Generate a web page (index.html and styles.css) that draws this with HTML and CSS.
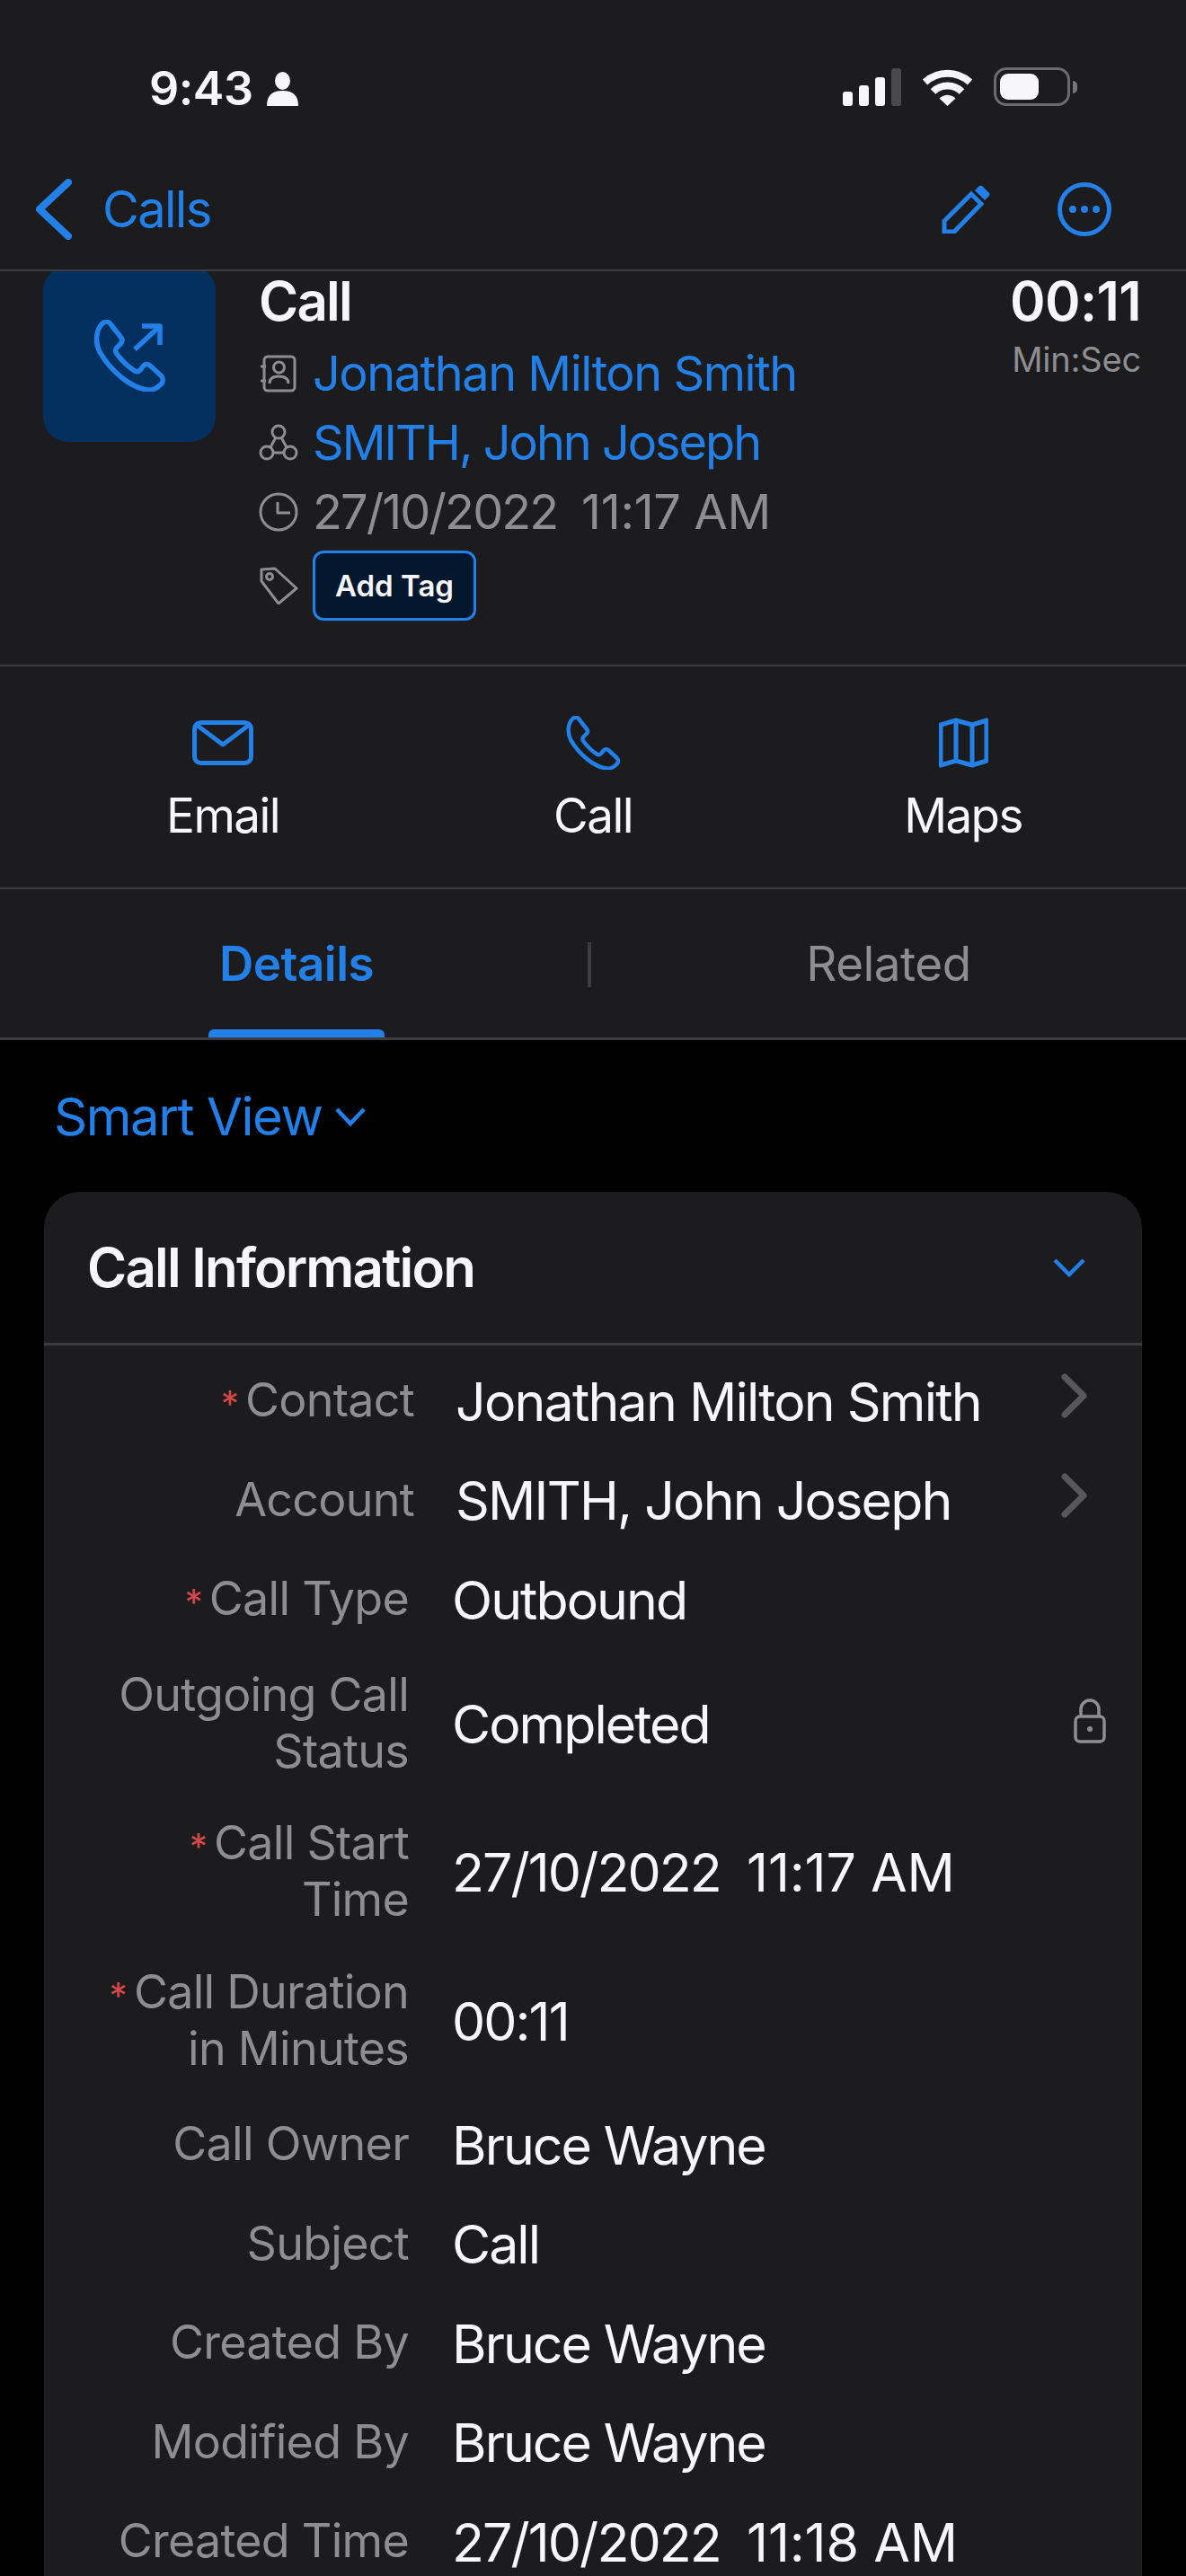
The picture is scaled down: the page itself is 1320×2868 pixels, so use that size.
FILE: index.html
```html
<!DOCTYPE html>
<html lang="en">
  <head>
    <meta charset="UTF-8" />
    <meta name="viewport" content="width=device-width, initial-scale=1.0" />
    <title>Call</title>
    <link rel="stylesheet" href="styles.css">
  </head>
  <body>
    <div class="screen">
      <div class="top-bar">
        <div class="status-bar">
          <span class="clock">9:43</span>
          <svg class="icon-person" width="35" height="38" viewBox="0 0 35 38"><ellipse cx="17.5" cy="10" rx="8.5" ry="10"/><path d="M0 38c0-13 7-17 17.5-17S35 25 35 38z"/></svg>
          <svg class="icon-signal" width="65" height="42" viewBox="0 0 65 42">
            <rect x="0" y="26" width="11" height="16" rx="3"/>
            <rect x="18" y="19" width="11" height="23" rx="3"/>
            <rect x="36" y="10" width="11" height="32" rx="3"/>
            <rect class="off" x="54" y="0" width="11" height="42" rx="3"/>
          </svg>
          <svg class="icon-wifi" width="57" height="42" viewBox="0 0 57 42">
            <path class="arc" d="M3.5 15.5A37 37 0 0 1 53.5 15.5"/>
            <path class="arc" d="M12.5 26A23 23 0 0 1 44.5 26"/>
            <path d="M19.5 33.5Q28.5 26 37.5 33.5L28.5 42z"/>
          </svg>
          <div class="battery"><div class="battery-fill"></div></div>
          <div class="battery-nub"></div>
        </div>
        <nav class="nav-bar">
          <svg class="nav-back" width="40" height="68" viewBox="0 0 40 68"><path d="M36 4L4 34l32 30"/></svg>
          <span class="nav-title">Calls</span>
          <svg class="nav-edit" width="54" height="54" viewBox="0 0 54 54">
            <path class="line" d="M3 40L33 10l11 11-30 31H3z"/>
            <path class="solid" d="M37 6l5-5q2-1 3 0l8 8q1 2 0 3l-5 5z"/>
          </svg>
          <svg class="nav-more" width="60" height="60" viewBox="0 0 60 60">
            <circle class="line" cx="30" cy="30" r="27.5"/>
            <circle class="solid" cx="17" cy="30" r="4"/>
            <circle class="solid" cx="30" cy="30" r="4"/>
            <circle class="solid" cx="43" cy="30" r="4"/>
          </svg>
        </nav>
      </div>

      <header class="call-head">
        <div class="avatar-clip">
          <div class="call-avatar">
            <svg width="80" height="80" viewBox="0 0 80 80">
              <path d="M10 4C14 1 18 2 20 6L31 20C33 23 32 25 30 27L26 31C24 33 24 35 26 38C32 46 38 52 46 57C48 58 50 58 52 56L56 51C58 49 61 49 63 51L75 62C78 65 78 69 75 72C71 76 66 79 60 78C42 76 20 58 7 36C2 26 2 12 10 4Z"/>
              <path d="M46 33L73 8M54 7H74V28"/>
            </svg>
          </div>
        </div>
        <div class="call-info">
          <div class="call-title">Call</div>
          <div class="call-line link">
            <svg width="44" height="42" viewBox="0 0 44 42">
              <rect x="6" y="2" width="34" height="38" rx="4"/>
              <path d="M2 13h6M2 29h6M12 32c0-6 4-8 10-8s11 2 11 8"/>
              <circle cx="22.500" cy="14" r="6"/>
            </svg>
            <span>Jonathan Milton Smith</span>
          </div>
          <div class="call-line link">
            <svg width="44" height="42" viewBox="0 0 44 42">
              <circle cx="22" cy="9" r="7"/>
              <circle cx="9" cy="32" r="7"/>
              <circle cx="35" cy="32" r="7"/>
              <path d="M19 15l-6 11M25 15l6 11M16 32h12"/>
            </svg>
            <span class="tight">SMITH, John Joseph</span>
          </div>
          <div class="call-line muted">
            <svg width="44" height="44" viewBox="0 0 44 44">
              <circle cx="22" cy="22" r="20"/>
              <path d="M21 11v12h14"/>
            </svg>
            <span class="keep tight-date">27/10/2022  <span class="time">11:17 AM</span></span>
          </div>
          <div class="call-tags">
            <svg width="44" height="42" viewBox="0 0 44 42">
              <path d="M3 3l15-1 24 22-20 17L3 16z"/>
              <circle cx="12" cy="11" r="3.500"/>
            </svg>
            <button class="tag-btn">Add Tag</button>
          </div>
        </div>
        <div class="call-time">
          <div class="call-time-val">00:11</div>
          <div class="call-time-unit">Min:Sec</div>
        </div>
      </header>

      <section class="actions">
        <div class="action">
          <svg width="68" height="50" viewBox="0 0 68 50">
            <rect x="2.500" y="2.500" width="63" height="45" rx="7"/>
            <path d="M6 6l28 21L62 6"/>
          </svg>
          <span>Email</span>
        </div>
        <div class="action">
          <svg width="60" height="60" viewBox="0 0 80 80">
            <path d="M10 4C14 1 18 2 20 6L31 20C33 23 32 25 30 27L26 31C24 33 24 35 26 38C32 46 38 52 46 57C48 58 50 58 52 56L56 51C58 49 61 49 63 51L75 62C78 65 78 69 75 72C71 76 66 79 60 78C42 76 20 58 7 36C2 26 2 12 10 4Z"/>
          </svg>
          <span>Call</span>
        </div>
        <div class="action">
          <svg width="55" height="54" viewBox="0 0 55 54">
            <path d="M2 7L19 2 37 7 53 2V47L37 52 19 47 2 52ZM19 2V47M37 7V52"/>
          </svg>
          <span>Maps</span>
        </div>
      </section>

      <div class="tabs">
        <div class="tab active">Details</div>
        <div class="tab-sep"></div>
        <div class="tab">Related</div>
      </div>

      <main class="content">
        <div class="smart-view">
          <span>Smart View</span>
          <svg width="34" height="22" viewBox="0 0 34 22"><path d="M2 3l15 16L32 3"/></svg>
        </div>

        <section class="card">
          <div class="card-head">
            <h2>Call Information</h2>
            <svg width="36" height="22" viewBox="0 0 36 22"><path d="M2 3l16 16L34 3"/></svg>
          </div>

          <div class="field shift">
            <div class="field-label"><span class="req">*</span>Contact</div>
            <div class="field-value">Jonathan Milton Smith</div>
            <svg class="field-go" width="30" height="50" viewBox="0 0 30 50"><path d="M4 4l21 21L4 46"/></svg>
          </div>
          <div class="field shift">
            <div class="field-label">Account</div>
            <div class="field-value">SMITH, John Joseph</div>
            <svg class="field-go" width="30" height="50" viewBox="0 0 30 50"><path d="M4 4l21 21L4 46"/></svg>
          </div>
          <div class="field">
            <div class="field-label"><span class="req">*</span>Call Type</div>
            <div class="field-value">Outbound</div>
          </div>
          <div class="field tall">
            <div class="field-label">Outgoing Call<br>Status</div>
            <div class="field-value">Completed</div>
            <svg class="field-lock" width="36" height="50" viewBox="0 0 36 50">
              <rect x="2" y="20" width="32" height="28" rx="5"/>
              <path d="M8 20v-8a10 10 0 0 1 20 0v8"/>
              <circle class="dot" cx="18" cy="34" r="3"/>
            </svg>
          </div>
          <div class="field tall">
            <div class="field-label"><span class="req">*</span>Call Start<br>Time</div>
            <div class="field-value">27/10/2022  <span class="time">11:17 AM</span></div>
          </div>
          <div class="field tall">
            <div class="field-label"><span class="req">*</span>Call Duration<br>in Minutes</div>
            <div class="field-value">00:11</div>
          </div>
          <div class="field">
            <div class="field-label">Call Owner</div>
            <div class="field-value">Bruce Wayne</div>
          </div>
          <div class="field">
            <div class="field-label">Subject</div>
            <div class="field-value">Call</div>
          </div>
          <div class="field">
            <div class="field-label">Created By</div>
            <div class="field-value">Bruce Wayne</div>
          </div>
          <div class="field">
            <div class="field-label">Modified By</div>
            <div class="field-value">Bruce Wayne</div>
          </div>
          <div class="field">
            <div class="field-label">Created Time</div>
            <div class="field-value">27/10/2022  <span class="time">11:18 AM</span></div>
          </div>
        </section>
      </main>
    </div>
  </body>
</html>
```

FILE: styles.css
```css
:root {
  --panel: #1c1c1e;
  --blue: #2280e8;
  --text: #f7f7f9;
  --muted: #8e8e92;
  --line: #3d3d40;
}

* {
  padding: 0;
  margin: 0;
  box-sizing: border-box;
}

body {
  background: #000;
  color: var(--text);
  font-family: Inter, "Noto Sans", sans-serif;
  overflow: hidden;
}

.screen {
  height: 2868px;
  overflow: hidden;
}

svg {
  flex: none;
  display: block;
  fill: none;
}

/* status + nav */
.top-bar {
  height: 302px;
  background: var(--panel);
  border-bottom: 2px solid var(--line);
}

.status-bar {
  height: 118px;
  padding: 75px 0 0 166px;
  display: flex;
  align-items: flex-end;
}

.clock {
  width: 131px;
  font-size: 52px;
  font-weight: 600;
  line-height: 38px;
  letter-spacing: -0.01em;
}

.icon-person {
  fill: var(--text);
}

.icon-signal {
  margin-left: 606px;
  fill: var(--text);
}

.icon-signal .off {
  fill: #4a4a4c;
}

.icon-wifi {
  margin-left: 23px;
  fill: var(--text);
}

.icon-wifi .arc {
  fill: none;
  stroke: var(--text);
  stroke-width: 8;
}

.battery {
  width: 85px;
  height: 43px;
  margin-left: 23px;
  padding: 4px;
  border: 3.5px solid #6c6c6e;
  border-radius: 14px;
}

.battery-fill {
  width: 43px;
  height: 100%;
  background: var(--text);
  border-radius: 9px;
}

.battery-nub {
  width: 5px;
  height: 14px;
  margin: 0 0 14px 3px;
  background: #77777a;
  border-radius: 0 5px 5px 0;
}

.nav-bar {
  display: flex;
  align-items: center;
  height: 182px;
  padding-top: 48px;
  padding-left: 40px;
}

.nav-back path {
  stroke: var(--blue);
  stroke-width: 8;
  stroke-linecap: round;
  stroke-linejoin: round;
}

.nav-title {
  margin-left: 34px;
  font-size: 56px;
  letter-spacing: -0.03em;
  color: var(--blue);
}

.nav-edit {
  margin-left: 813px;
}

.nav-more {
  margin-left: 75px;
}

.line {
  stroke: var(--blue);
  stroke-width: 5;
}

.solid {
  fill: var(--blue);
}

/* call header */
.call-head {
  position: relative;
  display: flex;
  height: 440px;
  background: var(--panel);
  border-bottom: 2px solid var(--line);
}

.avatar-clip {
  width: 192px;
  height: 191px;
  margin-left: 48px;
  overflow: hidden;
}

.call-avatar {
  height: 196px;
  margin-top: -6px;
  padding: 60px 0 0 56px;
  background: #04305f;
  border-radius: 28px;
}

.call-avatar svg {
  stroke: var(--blue);
  stroke-width: 5.500;
  stroke-linejoin: round;
}

.call-info {
  margin-left: 48px;
  flex: 1;
  padding-top: 3px;
}

.call-title {
  margin-bottom: 12px;
  font-size: 60px;
  font-weight: 600;
  line-height: 60px;
  letter-spacing: -0.03em;
}

.call-line {
  display: flex;
  align-items: center;
  gap: 16px;
  height: 77px;
  font-size: 54px;
  line-height: 77px;
  letter-spacing: -0.027em;
}

.call-line svg,
.call-tags svg {
  stroke: var(--muted);
  stroke-width: 3;
  stroke-linejoin: round;
}

.link {
  color: var(--blue);
}

.muted {
  color: var(--muted);
}

.keep {
  white-space: pre;
}

.tight {
  letter-spacing: -0.037em;
}

.tight-date {
  letter-spacing: -0.035em;
}

.call-line .time {
  letter-spacing: -0.005em;
}

.call-tags {
  display: flex;
  align-items: center;
  gap: 16px;
  margin-top: 5px;
}

.tag-btn {
  width: 182px;
  height: 78px;
  font-family: inherit;
  font-size: 33px;
  font-weight: 600;
  color: var(--text);
  background: #03172f;
  border: 3.5px solid var(--blue);
  border-radius: 12px;
}

.call-time {
  position: absolute;
  top: 3px;
  right: 50px;
  text-align: right;
}

.call-time-val {
  font-size: 60px;
  font-weight: 600;
  line-height: 60px;
  letter-spacing: -0.01em;
}

.call-time-unit {
  margin-top: 12px;
  font-size: 38px;
  line-height: 46px;
  letter-spacing: -0.005em;
  color: var(--muted);
}

/* action strip */
.actions {
  display: grid;
  grid-template-columns: repeat(3, 412px);
  padding: 55px 0 0 42px;
  height: 248px;
  background: var(--panel);
  border-bottom: 2px solid var(--line);
}

.action {
  display: flex;
  flex-direction: column;
  align-items: center;
  font-size: 53px;
  letter-spacing: -0.03em;
}

.action svg {
  height: 60px;
  stroke: var(--blue);
  stroke-width: 5;
  stroke-linejoin: round;
}

.action:nth-child(2) svg {
  stroke-width: 6;
}

.action span {
  margin-top: 19px;
  line-height: 64px;
}

/* tabs */
.tabs {
  display: flex;
  align-items: center;
  height: 168px;
  background: var(--panel);
  border-bottom: 3px solid var(--line);
}

.tab {
  position: relative;
  flex: 1;
  height: 100%;
  padding-top: 51px;
  text-align: center;
  font-size: 53px;
  line-height: 64px;
  letter-spacing: -0.01em;
  color: var(--muted);
}

.tab.active {
  flex: none;
  width: 654px;
  padding-left: 6px;
  font-weight: 600;
  color: var(--blue);
}

.tab.active::after {
  content: '';
  position: absolute;
  left: 232px;
  bottom: 0;
  width: 196px;
  height: 9px;
  background: var(--blue);
  border-radius: 6px 6px 0 0;
}

.tab-sep {
  width: 4px;
  height: 50px;
  margin-top: 2px;
  background: var(--line);
}

/* smart view + card */
.content {
  padding: 0 49px;
}

.smart-view {
  display: flex;
  align-items: center;
  gap: 15px;
  height: 169px;
  padding-left: 11px;
  font-size: 58px;
  letter-spacing: -0.025em;
  color: var(--blue);
}

.smart-view svg,
.card-head svg {
  stroke: var(--blue);
  stroke-width: 4.500;
}

.card {
  background: var(--panel);
  border-radius: 40px 40px 0 0;
}

.card-head {
  display: flex;
  align-items: center;
  justify-content: space-between;
  height: 171px;
  margin-bottom: 4px;
  padding: 0 63px 0 48px;
  border-bottom: 3px solid var(--line);
}

.card-head h2 {
  font-size: 60px;
  font-weight: 600;
  letter-spacing: -0.03em;
}

.field {
  display: flex;
  align-items: center;
  height: 110.5px;
}

.field.tall {
  height: 165.5px;
}

.field-label {
  width: 406px;
  font-size: 52px;
  line-height: 63px;
  letter-spacing: -0.014em;
  text-align: right;
  color: var(--muted);
  margin-top: 3px;
}

.req {
  margin-right: 8px;
  font-size: 40px;
  line-height: 1;
  color: #d5484a;
}

.field-value {
  flex: 1;
  margin: 6px 0 0 48px;
  font-size: 59px;
  letter-spacing: -0.033em;
  white-space: pre;
}

.field-value .time {
  letter-spacing: -0.003em;
}

.shift .field-label {
  width: 412px;
}

.shift .field-value {
  margin-left: 46px;
  letter-spacing: -0.03em;
}

.field-go {
  margin: 0 60px 6px 0;
  stroke: #58585a;
  stroke-width: 7;
  stroke-linecap: round;
  stroke-linejoin: round;
}

.field-lock {
  margin-right: 40px;
  stroke: var(--muted);
  stroke-width: 3.500;
}

.field-lock .dot {
  fill: var(--muted);
  stroke: none;
}
```
